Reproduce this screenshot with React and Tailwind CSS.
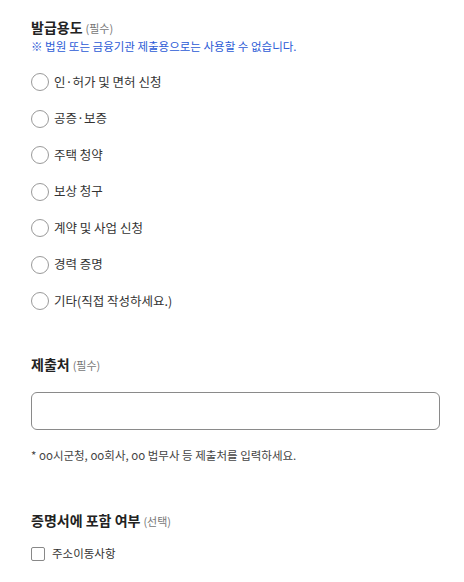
export default function App() {
  const options = [
    "인·허가 및 면허 신청",
    "공증·보증",
    "주택 청약",
    "보상 청구",
    "계약 및 사업 신청",
    "경력 증명",
    "기타(직접 작성하세요.)",
  ];

  return (
    <div
      className="min-h-[582px] bg-white pl-[31px] pr-[24px] pt-[18px] text-[#222]"
      style={{ fontFamily: '"Noto Sans CJK KR", "Noto Sans", sans-serif' }}
    >
      {/* 발급용도 */}
      <div className="flex items-baseline gap-[3px] leading-[18px]">
        <span className="text-[14px] font-bold">발급용도</span>
        <span className="text-[11px] text-[#777]">(필수)</span>
      </div>
      <p className="mt-[1px] text-[11.5px] leading-[16px] text-[#2c5bd6]">
        ※ 법원 또는 금융기관 제출용으로는 사용할 수 없습니다.
      </p>

      <ul className="mt-[19px] flex flex-col gap-[18.5px]">
        {options.map((label) => (
          <li key={label} className="flex h-[18px] items-center gap-[5px]">
            <span className="h-[18px] w-[18px] shrink-0 rounded-full border border-[#9a9a9a] bg-white" />
            <span className="text-[12.5px] text-[#333]">{label}</span>
          </li>
        ))}
      </ul>

      {/* 제출처 */}
      <div className="mt-[45px] flex items-baseline gap-[3px] leading-[18px]">
        <span className="text-[14px] font-bold">제출처</span>
        <span className="text-[11px] text-[#777]">(필수)</span>
      </div>
      <input
        type="text"
        className="mt-[18px] block h-[38px] w-full rounded-[6px] border border-[#8a8a8a] px-3 text-[13px] outline-none"
      />
      <p className="mt-[17px] text-[11.5px] leading-[16px] text-[#444]">
        * oo시군청, oo회사, oo 법무사 등 제출처를 입력하세요.
      </p>

      {/* 증명서에 포함 여부 */}
      <div className="mt-[48px] flex items-baseline gap-[3px] leading-[18px]">
        <span className="text-[14px] font-bold">증명서에 포함 여부</span>
        <span className="text-[11px] text-[#777]">(선택)</span>
      </div>
      <label className="mt-[15px] flex items-center gap-[7px]">
        <span className="h-[14px] w-[14px] shrink-0 rounded-[2px] border border-[#888] bg-white" />
        <span className="text-[11.5px] text-[#333]">주소이동사항</span>
      </label>
    </div>
  );
}
